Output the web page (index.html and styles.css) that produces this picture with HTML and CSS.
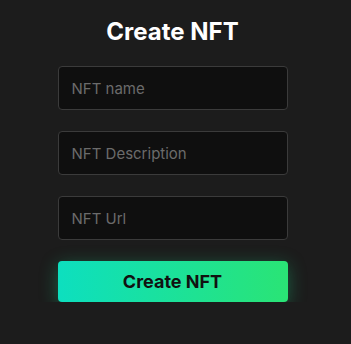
FILE: index.html
```html
<!DOCTYPE html>
<html lang="en">
<head>
    <meta charset="UTF-8">
    <meta name="viewport" content="width=device-width, initial-scale=1.0">
    <title>Create NFT</title>
    <link rel="stylesheet" href="styles.css">
</head>
<body>
    <div class="wrapper">
        <h1 class="title">Create NFT</h1>
        <form class="form">
            <input class="field" type="text" placeholder="NFT name">
            <input class="field" type="text" placeholder="NFT Description">
            <input class="field" type="text" placeholder="NFT Url">
            <button class="btn" type="button">Create NFT</button>
        </form>
    </div>
</body>
</html>
```

FILE: styles.css
```css
*{
    padding: 0;
    margin: 0;
    box-sizing: border-box;
}
body{
    background: #1c1c1c;
    font-family: Inter, "Noto Sans", sans-serif;
    padding-right: 6px;
}
.wrapper{
    width: 230px;
    margin: 0 auto;
    padding-top: 16px;
}
.title{
    color: #fff;
    font-size: 24px;
    font-weight: 700;
    line-height: 32px;
    text-align: center;
    margin-bottom: 18px;
}
.form{
    display: flex;
    flex-direction: column;
    gap: 21px;
}
.field{
    height: 44px;
    width: 100%;
    padding: 0 13px;
    background: #0f0f0f;
    border: 1px solid #3b3b3b;
    border-radius: 4px;
    color: #ddd;
    font-family: inherit;
    font-size: 15px;
    outline: none;
}
.field::placeholder{
    color: #6b6b6b;
}
.btn{
    height: 41px;
    width: 100%;
    border: none;
    border-radius: 4px;
    background: linear-gradient(90deg, #0ddfbf, #2ae475);
    box-shadow: 0 4px 18px rgba(30, 220, 140, 0.35);
    color: #111;
    font-family: inherit;
    font-size: 18px;
    font-weight: 700;
    cursor: pointer;
}
```
